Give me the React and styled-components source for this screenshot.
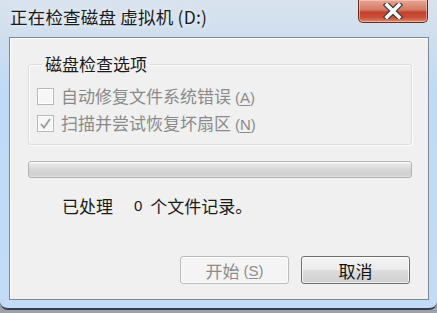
import styled, { createGlobalStyle } from "styled-components"

const GlobalStyle = createGlobalStyle`
  html, body {
    margin: 0;
    padding: 0;
    background: #9aa3ad;
  }
  body {
    font-family: "Noto Sans CJK SC", "Noto Sans", sans-serif;
  }
`

const Window = styled.div`
  width: 437px;
  height: 310px;
  box-sizing: border-box;
  display: flex;
  flex-direction: column;
  background: linear-gradient(180deg, #d9e3ee 0%, #cfdeee 12%, #bfdaf6 30%, #c2dcf7 100%);
  border-bottom: 2px solid #3a3f46;
  border-radius: 0 0 8px 8px;
  overflow: hidden;
`

const TitleBar = styled.div`
  height: 37px;
  display: flex;
  justify-content: space-between;
  align-items: flex-start;
  padding-left: 10px;
  padding-right: 9px;
`

const Title = styled.div`
  font-size: 17.5px;
  line-height: 17px;
  margin-top: 8px;
  color: #1a1a1a;
  letter-spacing: 0.2px;
  text-shadow: 0 0 6px rgba(255, 255, 255, 0.9);
`

const CloseButton = styled.div`
  width: 70px;
  height: 23px;
  box-sizing: border-box;
  border: 1px solid #6d2a20;
  border-top: none;
  border-radius: 0 0 5px 5px;
  background: linear-gradient(180deg, #e8a493 0%, #d47a64 45%, #c2412a 55%, #c9503a 80%, #de8c70 100%);
  box-shadow: inset 0 0 0 1px rgba(255, 220, 210, 0.5);
  display: flex;
  align-items: center;
  justify-content: center;
`

const Client = styled.div`
  flex: 1;
  margin: 0 8px 8px 9px;
  background: #f0f0f0;
  border: 1px solid #7c8794;
  box-shadow: inset 1px 1px 0 #ffffff;
  padding: 16px 16px 0 18px;
  display: flex;
  flex-direction: column;
  color: #1a1a1a;
  font-size: 17px;
`

const GroupBox = styled.fieldset`
  margin: 0;
  padding: 12px 0 10px 8px;
  border: 1px solid #dcdcdc;
  border-radius: 3px;
  box-shadow: inset 1px 1px 0 #ffffff, 1px 1px 0 #ffffff;
  display: flex;
  flex-direction: column;
  gap: 6px;
`

const Legend = styled.legend`
  padding: 0 3px;
  margin-left: 5px;
  font-size: 17px;
  line-height: 20px;
  color: #1a1a1a;
`

const CheckRow = styled.label`
  display: flex;
  align-items: center;
  gap: 7px;
  color: #8a8a8a;
  font-size: 17px;
  line-height: 19px;
`

const Box = styled.span`
  width: 17px;
  height: 17px;
  box-sizing: border-box;
  border: 1px solid #b9b9b9;
  background: #f6f6f6;
  box-shadow: inset 0 0 0 1px #ffffff;
  display: flex;
  align-items: center;
  justify-content: center;
`

const Key = styled.span`
  font-size: 15px;
  margin-left: 4px;
  font-family: "Liberation Sans", "DejaVu Sans", sans-serif;
  & u {
    text-underline-offset: 2px;
  }
`

const Progress = styled.div`
  margin-top: 16px;
  height: 17px;
  box-sizing: border-box;
  border: 1px solid #b2b2b2;
  border-radius: 3px;
  background: linear-gradient(180deg, #f3f3f3 0%, #e2e2e2 25%, #d6d6d6 55%, #cfcfcf 80%, #dedede 100%);
  box-shadow: inset 0 1px 0 #ffffff;
`

const Status = styled.div`
  margin-top: 18px;
  padding-left: 34px;
  display: flex;
  align-items: center;
  line-height: 20px;
`

const Count = styled.span`
  font-family: "Liberation Sans", sans-serif;
  font-size: 15px;
  margin: 0 8px 0 21px;
`

const Footer = styled.div`
  margin-top: auto;
  margin-bottom: 15px;
  display: flex;
  justify-content: flex-end;
  gap: 12px;
  padding-right: 2px;
`

const Button = styled.div`
  width: 109px;
  height: 28px;
  box-sizing: border-box;
  border-radius: 3px;
  display: flex;
  align-items: center;
  justify-content: center;
  font-size: 17px;
  border: 1px solid ${p => (p.$disabled ? "#b8bcbf" : "#6e6e6e")};
  color: ${p => (p.$disabled ? "#8c8c8c" : "#111111")};
  background: ${p =>
    p.$disabled
      ? "#f4f4f4"
      : "linear-gradient(180deg, #f4f4f4 0%, #ececec 48%, #dddddd 52%, #cfcfcf 100%)"};
  box-shadow: inset 0 0 0 1px ${p => (p.$disabled ? "#fbfbfb" : "rgba(255,255,255,0.7)")};
`

const CloseGlyph = () => (
  <svg width="22" height="16" viewBox="0 0 22 16">
    <path
      d="M5 2 L17 14 M17 2 L5 14"
      stroke="#3b3b3b"
      strokeWidth="6"
      strokeLinecap="square"
    />
    <path
      d="M5 2 L17 14 M17 2 L5 14"
      stroke="#ffffff"
      strokeWidth="3.6"
      strokeLinecap="square"
    />
  </svg>
)

const Check = () => (
  <svg width="13" height="13" viewBox="0 0 13 13">
    <path d="M2 7 L5 10.5 L11 2" fill="none" stroke="#9a9a9a" strokeWidth="1.8" />
  </svg>
)

const App = () => {
  return (
    <>
      <GlobalStyle />
      <Window>
        <TitleBar>
          <Title>正在检查磁盘 虚拟机 (D:)</Title>
          <CloseButton>
            <CloseGlyph />
          </CloseButton>
        </TitleBar>
        <Client>
          <GroupBox>
            <Legend>磁盘检查选项</Legend>
            <CheckRow>
              <Box />
              <span>
                自动修复文件系统错误<Key>(<u>A</u>)</Key>
              </span>
            </CheckRow>
            <CheckRow>
              <Box>
                <Check />
              </Box>
              <span>
                扫描并尝试恢复坏扇区<Key>(<u>N</u>)</Key>
              </span>
            </CheckRow>
          </GroupBox>
          <Progress />
          <Status>
            已处理<Count>0</Count>个文件记录。
          </Status>
          <Footer>
            <Button $disabled>
              开始<Key>(<u>S</u>)</Key>
            </Button>
            <Button>取消</Button>
          </Footer>
        </Client>
      </Window>
    </>
  )
}

export default App
